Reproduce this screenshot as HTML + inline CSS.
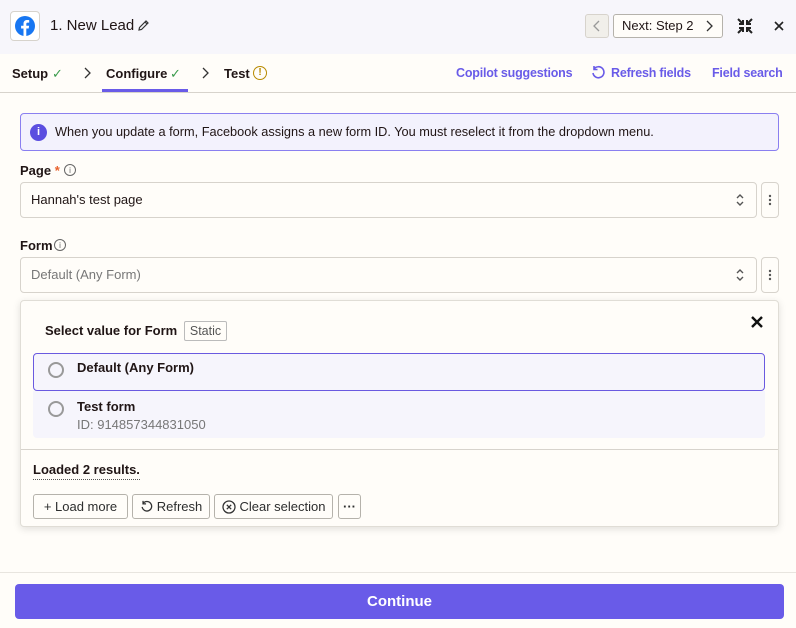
<!DOCTYPE html><html><head><style>
*{box-sizing:border-box;margin:0;padding:0}
body{width:796px;height:628px;background:#fffdf9;font-family:"Liberation Sans",sans-serif;color:#201515;position:relative;overflow:hidden}
.a{position:absolute;white-space:nowrap}
.hdr{left:0;top:0;width:796px;height:54px;background:#f7f6fb}
.tab{font-size:13px;font-weight:bold;top:66px}
.chk{color:#3a9b4c;font-size:13px;top:66px}
.link{color:#695be8;font-size:12.5px;font-weight:bold;top:66px;letter-spacing:-0.2px}
.inp{border:1px solid #d7d3cc;border-radius:4px;background:#fffdf9}
.btn{border:1px solid #b5b2ab;border-radius:3px;background:#fffdf9;font-size:13px;height:25px;top:494px;display:flex;align-items:center;justify-content:center;gap:4px;color:#2d2e2e}
</style></head><body>
<div class="a hdr"></div>
<div class="a" style="left:10px;top:11px;width:30px;height:30px;border:1px solid #d7d3cc;border-radius:4px;background:#fff"></div>
<svg class="a" style="left:14px;top:15px" width="22" height="22" viewBox="0 0 22 22"><circle cx="11" cy="11" r="10" fill="#1877f2"/><path d="M12.3 21V13.5h2.4l.4-2.8h-2.8V9c0-.8.3-1.4 1.4-1.4h1.5V5.1c-.3 0-1.1-.1-2.1-.1-2.2 0-3.6 1.3-3.6 3.7v2H7.1v2.8h2.4V21z" fill="#fff"/></svg>
<div class="a" style="left:50px;top:17px;font-size:15px">1. New Lead</div>
<svg class="a" style="left:137px;top:19px" width="13" height="13" viewBox="0 0 13 13"><path d="M2 11l.5-2.5L9 2l2 2-6.5 6.5z M8 3l2 2" fill="none" stroke="#333" stroke-width="1.2"/></svg>
<div class="a" style="left:585px;top:14px;width:24px;height:24px;border:1px solid #d7d3cc;border-radius:3px;background:#f1efea"></div>
<svg class="a" style="left:592px;top:20px" width="10" height="12" viewBox="0 0 10 12"><path d="M7 1L2 6l5 5" fill="none" stroke="#999" stroke-width="1.3"/></svg>
<div class="a" style="left:613px;top:14px;width:110px;height:24px;border:1px solid #b5b2ab;border-radius:3px;background:#fffdf9"></div>
<div class="a" style="left:622px;top:18px;font-size:13px">Next: Step 2</div>
<svg class="a" style="left:704px;top:20px" width="10" height="12" viewBox="0 0 10 12"><path d="M3 1l5 5-5 5" fill="none" stroke="#333" stroke-width="1.3"/></svg>
<svg class="a" style="left:736px;top:17px" width="18" height="18" viewBox="0 0 18 18" stroke="#222" stroke-width="2" fill="none"><path d="M2 2l5 5M7 3v4H3M16 2l-5 5M11 3v4h4M2 16l5-5M3 11h4v4M16 16l-5-5M15 11h-4v4"/></svg>
<svg class="a" style="left:774px;top:21px" width="10" height="10" viewBox="0 0 10 10"><path d="M1 1l8 8M9 1l-8 8" stroke="#222" stroke-width="1.6"/></svg>
<div class="a tab" style="left:12px">Setup</div><div class="a chk" style="left:52px">✓</div>
<svg class="a" style="left:83px;top:67px" width="8" height="12" viewBox="0 0 8 12"><path d="M2 1l5 5-5 5" fill="none" stroke="#333" stroke-width="1.3"/></svg>
<div class="a tab" style="left:106px">Configure</div><div class="a chk" style="left:170px">✓</div>
<div class="a" style="left:102px;top:89px;width:86px;height:3px;background:#695be8"></div>
<svg class="a" style="left:201px;top:67px" width="8" height="12" viewBox="0 0 8 12"><path d="M2 1l5 5-5 5" fill="none" stroke="#333" stroke-width="1.3"/></svg>
<div class="a tab" style="left:224px">Test</div>
<div class="a" style="left:253px;top:66px;width:14px;height:14px;border:1.5px solid #b88a00;border-radius:50%;font-size:10px;color:#b88a00;text-align:center;line-height:11px;font-weight:bold">!</div>
<div class="a link" style="left:456px">Copilot suggestions</div>
<svg class="a" style="left:591px;top:65px" width="14" height="15" viewBox="0 0 14 15"><path d="M3 4a5.5 5.5 0 1 1-1 4M3 1v3.5h3.5" fill="none" stroke="#695be8" stroke-width="1.6"/></svg>
<div class="a link" style="left:611px">Refresh fields</div>
<div class="a link" style="left:712px">Field search</div>
<div class="a" style="left:0;top:92px;width:796px;height:1px;background:#d7d3cc"></div>
<div class="a" style="left:20px;top:113px;width:759px;height:38px;border:1px solid #8a7ff0;border-radius:4px;background:#f3f2fd"></div>
<div class="a" style="left:30px;top:124px;width:17px;height:17px;border-radius:50%;background:#5b4ee0;color:#fff;font-size:11px;font-weight:bold;text-align:center;line-height:17px">i</div>
<div class="a" style="left:55px;top:124px;font-size:12.75px">When you update a form, Facebook assigns a new form ID. You must reselect it from the dropdown menu.</div>
<div class="a" style="left:20px;top:163px;font-size:13px;font-weight:bold">Page <span style="color:#e8612c">*</span></div>
<div class="a" style="left:64px;top:164px;width:12px;height:12px;border:1px solid #666;border-radius:50%;font-size:8px;text-align:center;line-height:11px;color:#666">i</div>
<div class="a inp" style="left:20px;top:182px;width:737px;height:36px"></div>
<div class="a" style="left:31px;top:192px;font-size:13px">Hannah's test page</div>
<div class="a inp" style="left:761px;top:182px;width:18px;height:36px"></div>
<div class="a" style="left:20px;top:238px;font-size:13px;font-weight:bold">Form</div>
<div class="a" style="left:54px;top:239px;width:12px;height:12px;border:1px solid #666;border-radius:50%;font-size:8px;text-align:center;line-height:11px;color:#666">i</div>
<div class="a inp" style="left:20px;top:257px;width:737px;height:36px"></div>
<div class="a" style="left:31px;top:267px;font-size:13px;color:#777">Default (Any Form)</div>
<div class="a inp" style="left:761px;top:257px;width:18px;height:36px"></div>
<svg class="a" style="left:734px;top:193px" width="12" height="14" viewBox="0 0 12 14" fill="none" stroke="#555" stroke-width="1.4"><path d="M3 5l3-3 3 3M3 9l3 3 3-3"/></svg>
<svg class="a" style="left:734px;top:268px" width="12" height="14" viewBox="0 0 12 14" fill="none" stroke="#555" stroke-width="1.4"><path d="M3 5l3-3 3 3M3 9l3 3 3-3"/></svg>
<svg class="a" style="left:767px;top:193px" width="6" height="14"><circle cx="3" cy="3" r="1.2" fill="#555"/><circle cx="3" cy="7" r="1.2" fill="#555"/><circle cx="3" cy="11" r="1.2" fill="#555"/></svg>
<svg class="a" style="left:767px;top:268px" width="6" height="14"><circle cx="3" cy="3" r="1.2" fill="#555"/><circle cx="3" cy="7" r="1.2" fill="#555"/><circle cx="3" cy="11" r="1.2" fill="#555"/></svg>
<div class="a" style="left:20px;top:300px;width:759px;height:227px;border:1px solid #e0ddd6;border-radius:4px;background:#fffdf9;box-shadow:0 2px 8px rgba(0,0,0,.12)"></div>
<div class="a" style="left:45px;top:323px;font-size:13px;font-weight:bold">Select value for Form</div>
<div class="a" style="left:184px;top:321px;width:43px;height:20px;border:1px solid #bbb;border-radius:2px;font-size:12.5px;color:#555;text-align:center;line-height:18px">Static</div>
<svg class="a" style="left:750px;top:315px" width="14" height="14" viewBox="0 0 14 14"><path d="M2 2l10 10M12 2L2 12" stroke="#111" stroke-width="2.4"/></svg>
<div class="a" style="left:33px;top:391px;width:732px;height:47px;background:#f6f5fc;border-radius:0 0 4px 4px"></div>
<div class="a" style="left:33px;top:353px;width:732px;height:38px;background:#f6f5fc;border:1px solid #6a5ae0;border-radius:4px"></div>
<div class="a" style="left:48px;top:362px;width:16px;height:16px;border:2px solid #999;border-radius:50%"></div>
<div class="a" style="left:77px;top:360px;font-size:13px;font-weight:bold">Default (Any Form)</div>
<div class="a" style="left:48px;top:401px;width:16px;height:16px;border:2px solid #999;border-radius:50%"></div>
<div class="a" style="left:77px;top:399px;font-size:13px;font-weight:bold">Test form</div>
<div class="a" style="left:77px;top:417px;font-size:13px;color:#777">ID: 914857344831050</div>
<div class="a" style="left:21px;top:449px;width:757px;height:1px;background:#d7d3cc"></div>
<div class="a" style="left:33px;top:462px;font-size:13px;font-weight:bold;border-bottom:1px dotted #555;padding-bottom:2px">Loaded 2 results.</div>
<div class="a btn" style="left:33px;width:95px">+ Load more</div>
<div class="a btn" style="left:132px;width:78px"><svg width="13" height="13" viewBox="0 0 14 15"><path d="M3 4a5.5 5.5 0 1 1-1 4M3 1v3.5h3.5" fill="none" stroke="#333" stroke-width="1.5"/></svg>Refresh</div>
<div class="a btn" style="left:214px;width:119px"><svg width="14" height="14" viewBox="0 0 14 14"><circle cx="7" cy="7" r="6" fill="none" stroke="#333" stroke-width="1.3"/><path d="M4.8 4.8l4.4 4.4M9.2 4.8l-4.4 4.4" stroke="#333" stroke-width="1.3"/></svg>Clear selection</div>
<div class="a btn" style="left:338px;width:23px;font-weight:bold">···</div>
<div class="a" style="left:0;top:572px;width:796px;height:1px;background:#e8e5df"></div>
<div class="a" style="left:15px;top:584px;width:769px;height:35px;background:#695be8;border-radius:4px;color:#fff;font-size:15px;font-weight:bold;text-align:center;line-height:35px">Continue</div>
</body></html>
